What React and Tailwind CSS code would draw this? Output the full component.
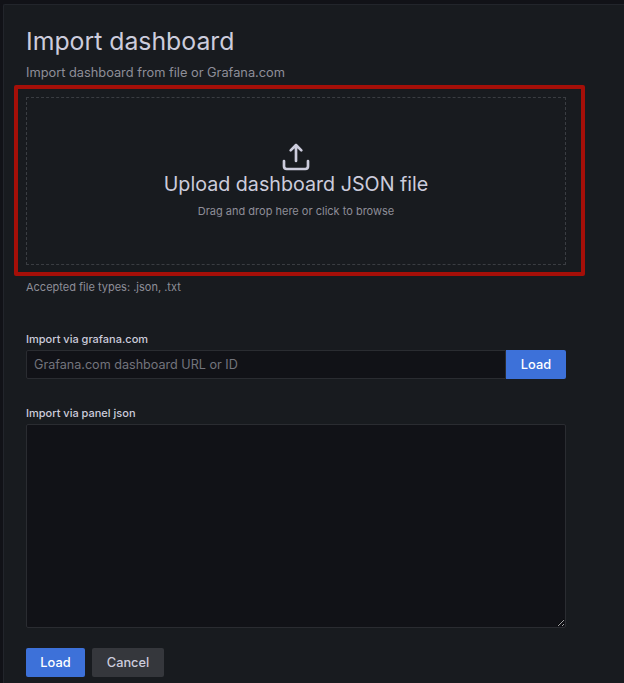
import React from 'react';

function App() {
  return (
    <div className="h-[683px] overflow-hidden bg-[#111217] pt-[4px] pl-[3px] font-['Inter',sans-serif] text-[#ccccdc]">
      <div className="h-[700px] rounded-tl-[2px] border border-r-0 border-[#22252b] bg-[#181b1f] pl-[22px] pt-[20px]">
        <div className="w-[540px]">
          <h1 className="text-[24.8px] leading-[32px] font-normal">Import dashboard</h1>
          <p className="mt-[8px] text-[12.8px] leading-[16px] text-[#8e8e98]">Import dashboard from file or Grafana.com</p>

          <div className="relative mt-[16px]">
            <div className="flex h-[168px] w-[540px] flex-col items-center border border-dashed border-[#3a3d42] pt-[43px]">
              <svg width="32" height="32" viewBox="0 0 24 24" fill="#ccccdc">
                <path d="M8.71 7.71L11 5.41V15a1 1 0 0 0 2 0V5.41l2.29 2.3a1 1 0 0 0 1.42 0 1 1 0 0 0 0-1.42l-4-4a1 1 0 0 0-.33-.21 1 1 0 0 0-.76 0 1 1 0 0 0-.33.21l-4 4a1 1 0 1 0 1.42 1.42zM21 14a1 1 0 0 0-1 1v4a1 1 0 0 1-1 1H5a1 1 0 0 1-1-1v-4a1 1 0 0 0-2 0v4a3 3 0 0 0 3 3h14a3 3 0 0 0 3-3v-4a1 1 0 0 0-1-1z" />
              </svg>
              <div className="mt-[-1px] text-[19.7px] leading-[24px]">Upload dashboard JSON file</div>
              <div className="mt-[7px] text-[11px] leading-[16px] text-[#8e8e98]">Drag and drop here or click to browse</div>
            </div>
            <div className="absolute top-[-12px] left-[-12px] h-[191px] w-[571px] rounded-[2px] border-[4px] border-[#a50f08]" />
          </div>

          <p className="mt-[14px] text-[11px] leading-[16px] text-[#8e8e98]">Accepted file types: .json, .txt</p>

          <label className="mt-[36px] block text-[11px] leading-[16px] font-medium">Import via grafana.com</label>
          <div className="mt-[3px] flex h-[29px]">
            <input
              className="min-w-0 flex-1 rounded-l-[2px] border border-[#2a2c31] bg-[#111217] px-[7px] pt-[1px] text-[12.6px] outline-none placeholder:text-[#73747c]"
              placeholder="Grafana.com dashboard URL or ID"
            />
            <button className="w-[60px] rounded-r-[2px] bg-[#3d71d9] text-[12.8px] font-medium text-white">Load</button>
          </div>

          <label className="mt-[26px] block text-[11px] leading-[16px] font-medium">Import via panel json</label>
          <textarea className="mt-[3px] block h-[204px] w-[540px] rounded-[2px] border border-[#2a2c31] bg-[#111217] outline-none" />

          <div className="mt-[20px] flex gap-[7px]">
            <button className="h-[29px] w-[59px] rounded-[2px] bg-[#3d71d9] text-[12.8px] font-medium text-white">Load</button>
            <button className="h-[29px] w-[72px] rounded-[2px] bg-[#35373c] text-[12.8px] font-medium">Cancel</button>
          </div>
        </div>
      </div>
    </div>
  );
}

export default App;
